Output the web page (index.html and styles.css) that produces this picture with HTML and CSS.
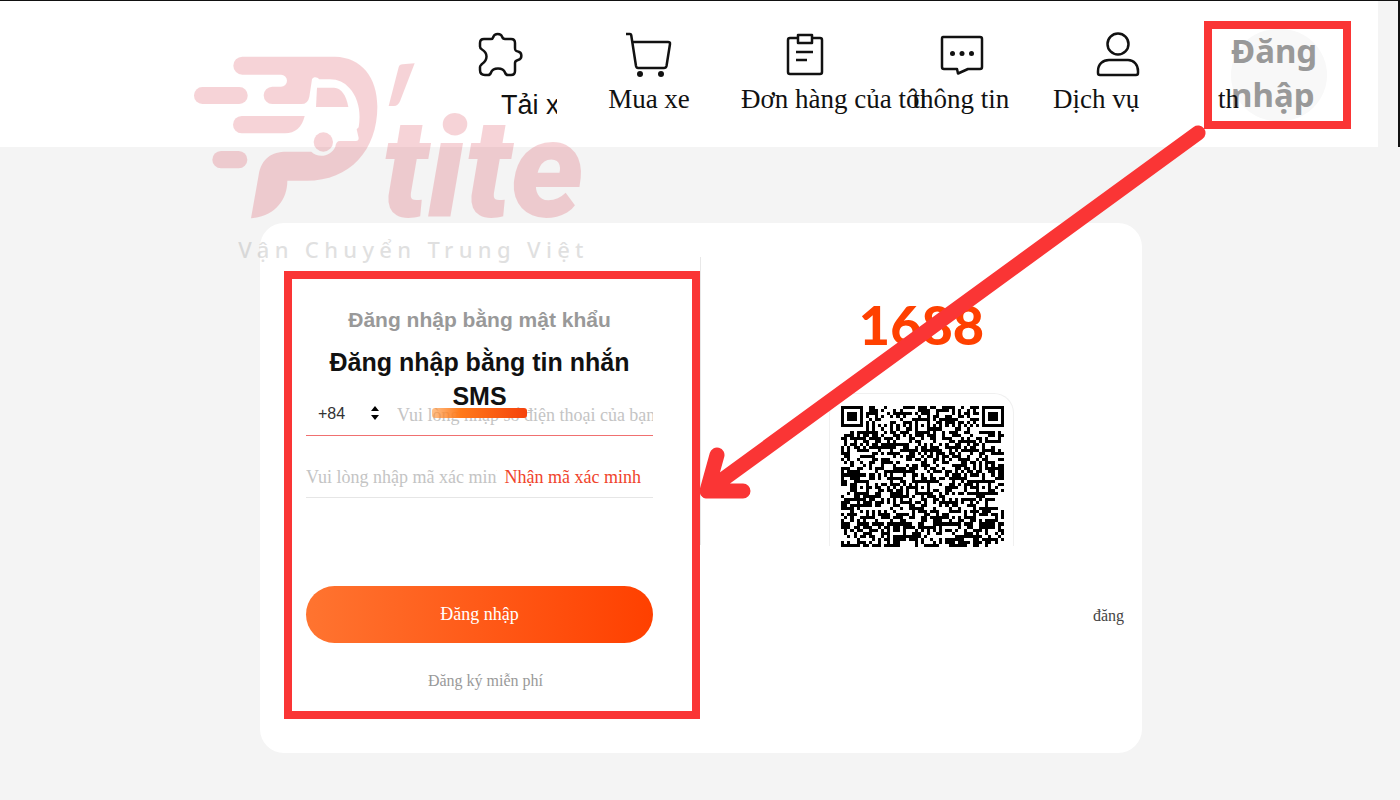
FILE: index.html
```html
<!DOCTYPE html>
<html lang="vi">
<head>
    <meta charset="UTF-8">
    <meta name="viewport" content="width=device-width, initial-scale=1.0">
    <title>Đăng nhập 1688</title>
    <link rel="stylesheet" href="styles.css">
</head>
<body>
    <header class="topbar">
        <nav class="nav">
            <a class="nav-item nav-download" href="#">
                <svg class="icon" viewBox="0 0 48 48"><path d="M8 8H15C17 8 17 7 17.500 5.500C18.500 2 25 2 26 5.500C26.500 7 26.500 8 29 8H35Q39 8 39 12V17C39 20 40 20 42 20.500C46.500 21.500 46.500 28 42 29C40 29.500 39 30 39 32V40Q39 44 35 44H32C30 44 29.500 43 29 41.500C27 36 17 36 15 41.500C14.500 43 14 44 12 44H9Q4 44 4 39V36C4 34.500 5 34 6 33C12 29 12 22 6 18.500C5 18 4 17 4 15.500V12Q4 8 8 8Z"/></svg>
                <span class="nav-label">Tải x</span>
            </a>
            <a class="nav-item" href="#">
                <svg class="icon" viewBox="0 0 48 48"><path d="M1 3H5Q6 3 6.200 4L11 35Q11.500 37 13 37H39Q41 37 41.500 35L45 13Q45.300 11 43 11H8"/><circle class="dot" cx="15" cy="43" r="3"/><circle class="dot" cx="36" cy="43" r="3"/></svg>
                <span class="nav-label">Mua xe</span>
            </a>
            <a class="nav-item" href="#">
                <svg class="icon" viewBox="0 0 48 48"><path d="M16 7H9Q7 7 7 9V41Q7 43 9 43H39Q41 43 41 41V9Q41 7 39 7H31M17 4H31V12H17ZM15 21H32M15 29H26"/></svg>
                <span class="nav-label label-start">Đơn hàng của tôi</span>
            </a>
            <a class="nav-item" href="#">
                <svg class="icon" viewBox="0 0 48 48"><path d="M6 6H43Q45 6 45 8V36Q45 38 43 38H31L21 42.500L20 38H7Q5 38 5 36V8Q5 6 6 6Z"/><circle class="dot" cx="15.500" cy="22.500" r="2.500"/><circle class="dot" cx="25" cy="22.500" r="2.500"/><circle class="dot" cx="34.500" cy="22.500" r="2.500"/></svg>
                <span class="nav-label">thông tin</span>
            </a>
            <a class="nav-item" href="#">
                <svg class="icon" viewBox="0 0 48 48"><circle cx="25" cy="13" r="10.500"/><path d="M5 42V40C5 33 10 29 16 29H35C41 29 45 34 45 40V42Q45 44 43 44H7Q5 44 5 42Z"/></svg>
                <span class="nav-label label-start">Dịch vụ</span>
            </a>
            <a class="login-box" href="#">
                <span class="login-circle">Đăng<br>nhập</span>
                <span class="login-tail">th</span>
            </a>
        </nav>
    </header>

    <main class="page">
        <div class="card">
            <form class="login-form">
                <button class="tab" type="button">Đăng nhập bằng mật khẩu</button>
                <button class="tab tab-active" type="button">Đăng nhập bằng tin nhắn SMS</button>
                <div class="field field-phone">
                    <select class="country" aria-label="Mã quốc gia">
                        <option>+84</option>
                    </select>
                    <svg class="sort" viewBox="0 0 10 14"><path d="M1 5L5 0L9 5ZM1 9L5 14L9 9Z"/></svg>
                    <input type="tel" aria-label="Số điện thoại" placeholder="Vui lòng nhập số điện thoại của bạn">
                </div>
                <div class="field field-code">
                    <input type="text" aria-label="Mã xác minh" placeholder="Vui lòng nhập mã xác minh">
                    <a class="get-code" href="#">Nhận mã xác minh</a>
                </div>
                <button class="submit" type="submit">Đăng nhập</button>
                <a class="register" href="#">Đăng ký miễn phí</a>
            </form>
            <div class="divider"></div>
            <section class="scan">
                <div class="brand">1688</div>
                <div class="qr-frame">
                    <svg class="qr" viewBox="0 0 53 46" shape-rendering="crispEdges"><path id="qr"/></svg>
                </div>
                <p class="scan-note">đăng</p>
            </section>
        </div>
    </main>

    <svg class="watermark" viewBox="0 0 1260 720">
        <g class="mark">
            <rect x="42" y="141" width="161" height="51" rx="25"/>
            <rect x="97" y="333" width="105" height="52" rx="26"/>
            <path d="M185 228H374C366 262 345 280 315 280H185A26 26 0 0 1 185 228Z"/>
            <path d="M187 50H465C545 52 592 112 592 200C592 330 510 422 380 422H322C322 480 285 528 213 535L236 405C244 355 275 335 320 335H394C412 354 452 352 466 320Q468 303 480 303H528Q536 303 536 294L530 268L536 262C544 215 534 172 508 144Q486 118 450 118H418C412 112 402 108 396 118L388 170Q384 192 364 192H277A26 26 0 0 1 277 140H303A18 18 0 0 0 303 104H187A27 27 0 0 1 187 50Z"/>
            <path d="M411 143H462C485 145 498 165 505 201H408Z"/>
            <circle cx="430" cy="306" r="29"/>
            <path d="M656 82Q658 73 668 73L704 70L660 184Q654 198 642 198H626Z"/>
            <text class="mark-name" x="605" y="532">tite</text>
        </g>
        <text class="mark-sub" x="175" y="655">Vận Chuyển Trung Việt</text>
    </svg>
    <svg class="arrow" viewBox="0 0 520 390">
        <path d="M508 13L17 371M27 335L17 371H53"/>
    </svg>

    <script>
        const size = 53;
        const rows = 46;
        let seed = 1688;

        function random() {
            seed = (seed * 48271) % 2147483647;
            return seed / 2147483647;
        }

        function ring(x, y, cx, cy) {
            return Math.max(Math.abs(x - cx), Math.abs(y - cy));
        }

        function isDark(x, y) {
            const noise = random() < 0.53;
            // finder patterns
            for (const cx of [3, size - 4]) {
                const d = ring(x, y, cx, 3);
                if (d <= 4) return d !== 2 && d !== 4;
            }
            // alignment patterns
            for (const [cx, cy] of [[26, 6], [6, 26], [26, 26], [46, 26]]) {
                const d = ring(x, y, cx, cy);
                if (d <= 2) return d !== 1;
            }
            if (y === 6 || x === 6) return (x + y) % 2 === 0;
            // logo in the lower part
            if (y >= 42 && x >= 17 && x <= 24) {
                return !(y >= 43 && x >= 19 && x <= 23) || (y === 43 && x !== 21);
            }
            return noise;
        }

        let d = '';
        for (let y = 0; y < rows; y++) {
            for (let x = 0; x < size; x++) {
                if (isDark(x, y)) d += `M${x} ${y}h1v1h-1z`;
            }
        }
        document.getElementById('qr').setAttribute('d', d);
    </script>
</body>
</html>
```

FILE: styles.css
```css
* {
    box-sizing: border-box;
}
body {
    margin: 0;
    position: relative;
    min-height: 100vh;
    overflow-x: hidden;
    background-color: #f4f4f4;
    font-family: "Liberation Serif", "Times New Roman", serif;
    color: #111;
}
a {
    color: inherit;
    text-decoration: none;
}
button, input, select {
    font-family: inherit;
    border: none;
    background: none;
    padding: 0;
    outline: none;
}
.topbar {
    height: 147px;
    padding-right: 20px;
    border-top: 1px solid #111;
    border-right: 2px solid #111;
}
.nav {
    display: grid;
    grid-template-columns: repeat(6, 156px);
    justify-content: end;
    height: 146px;
    padding: 20px 27px 0 0;
    background-color: #fff;
}
.nav-item {
    display: flex;
    flex-direction: column;
    align-items: center;
    padding-top: 10px;
}
.icon {
    width: 48px;
    height: 48px;
    fill: none;
    stroke: #111;
    stroke-width: 2.5;
    stroke-linejoin: round;
}
.icon .dot {
    fill: #111;
    stroke: none;
}
.nav-label {
    font-size: 27px;
    line-height: 40px;
    white-space: nowrap;
}
.label-start {
    align-self: flex-start;
    margin-left: 14px;
}
.nav-download {
    padding-left: 14px;
}
.nav-download .nav-label {
    align-self: flex-end;
    width: 56px;
    margin: 6px 14px 0 0;
    overflow: hidden;
    font-family: "Liberation Sans", Arial, sans-serif;
}
.login-box {
    position: relative;
    justify-self: end;
    width: 147px;
    height: 108px;
    padding: 0 16px 0 19px;
    border: 8px solid #fa3535;
}
.login-circle {
    display: block;
    width: 96px;
    height: 92px;
    border-radius: 48px;
    background-color: #f8f8f8;
    font-family: "Noto Sans", "Open Sans", sans-serif;
    font-size: 33px;
    font-weight: bold;
    line-height: 44px;
    color: #999;
}
.login-tail {
    position: absolute;
    left: 6px;
    bottom: 6px;
    font-size: 27px;
    line-height: 32px;
}
.page {
    padding: 76px 18px 47px 20px;
}
.card {
    display: flex;
    max-width: 882px;
    min-height: 530px;
    margin: 0 auto;
    border-radius: 24px;
    background-color: #fff;
}
.login-form {
    display: flex;
    flex-direction: column;
    width: 416px;
    margin: 48px 0 34px 24px;
    padding: 24px 39px 13px 14px;
    border: 8px solid #fa3535;
}
.tab {
    font-family: "Liberation Sans", Arial, sans-serif;
    font-size: 21px;
    font-weight: bold;
    line-height: 34px;
    color: #999;
}
.tab-active {
    position: relative;
    z-index: 1;
    margin-top: 8px;
    font-size: 25px;
    color: #111;
}
.tab-active::after {
    content: "";
    position: absolute;
    left: 126px;
    bottom: -5px;
    z-index: -1;
    width: 95px;
    height: 10px;
    border-radius: 3px;
    background: linear-gradient(to right, rgba(255, 150, 60, 0.6), #ff7a1a 30%, #f5420c);
}
.field {
    display: flex;
    align-items: center;
    height: 41px;
    margin-top: 21px;
    border-bottom: 1px solid #e6e6e6;
}
.field-phone {
    margin-top: -18px;
    border-bottom-color: #f07070;
}
.field input {
    flex: 1;
    min-width: 0;
    height: 40px;
    font-size: 18px;
}
.field input::placeholder {
    color: #c4c4c4;
}
.field-code input {
    margin-right: 8px;
}
.country {
    width: 58px;
    margin-bottom: 4px;
    padding-left: 12px;
    appearance: none;
    font-family: "Liberation Sans", Arial, sans-serif;
    font-size: 16px;
    color: #333;
}
.sort {
    width: 10px;
    height: 14px;
    margin: 0 17px 4px 6px;
}
.get-code {
    margin-right: 12px;
    font-size: 18px;
    color: #f0432a;
}
.submit {
    height: 57px;
    margin-top: 88px;
    border-radius: 29px;
    background: linear-gradient(to right, #ff7430, #ff4000);
    font-size: 18px;
    color: #fff;
}
.register {
    align-self: center;
    margin: 21px 0 0 12px;
    font-size: 16px;
    line-height: 34px;
    color: #999;
}
.divider {
    width: 1px;
    height: 288px;
    margin-top: 34px;
    background-color: #e8e8e8;
}
.scan {
    flex: 1;
    display: flex;
    flex-direction: column;
    align-items: center;
    padding-top: 70px;
}
.brand {
    font-family: Lato, "Liberation Sans", sans-serif;
    font-size: 54px;
    font-weight: 900;
    line-height: 64px;
    color: #ff4000;
}
.qr-frame {
    width: 185px;
    height: 153px;
    margin-top: 36px;
    padding: 12px 0 0 11px;
    border: 1px solid #f0f0f0;
    border-bottom: none;
    border-radius: 20px 20px 0 0;
}
.qr {
    display: block;
    width: 163px;
    height: 141px;
}
.scan-note {
    align-self: flex-end;
    margin: 60px 18px 0 0;
    font-size: 16px;
    line-height: 20px;
    color: #444;
}
.watermark {
    position: absolute;
    left: 180px;
    top: 40px;
    width: 420px;
    height: 240px;
    pointer-events: none;
}
.mark {
    fill: #d21428;
    opacity: 0.18;
}
.mark-name {
    font-family: Roboto, sans-serif;
    font-size: 415px;
    font-weight: 900;
    font-style: italic;
}
.mark-sub {
    font-family: "Noto Sans", sans-serif;
    font-size: 66px;
    font-weight: 500;
    letter-spacing: 16px;
    fill: #777;
    opacity: 0.22;
}
.arrow {
    position: absolute;
    left: 690px;
    top: 120px;
    width: 520px;
    height: 390px;
    fill: none;
    stroke: #fa3535;
    stroke-width: 15;
    stroke-linecap: round;
    stroke-linejoin: round;
    pointer-events: none;
}
```
